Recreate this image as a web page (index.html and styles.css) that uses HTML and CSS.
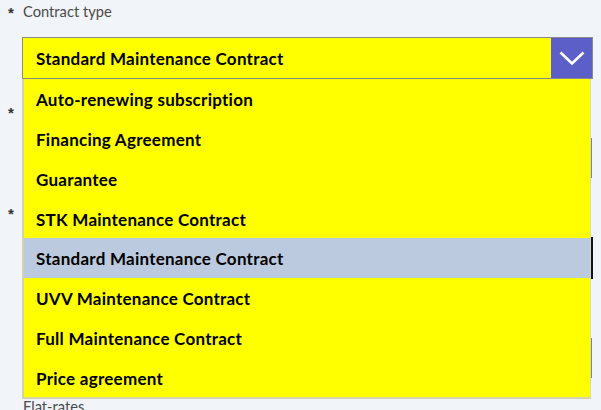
FILE: index.html
```html
<!DOCTYPE html>
<html lang="en">
<head>
<meta charset="utf-8">
<title>Contract type</title>
<link rel="stylesheet" href="styles.css">
</head>
<body>
<form class="form">
  <div class="field field-first">
    <div class="label"><span class="req">*</span><span class="label-text">Contract type</span></div>
    <div class="select">
      <span class="select-value">Standard Maintenance Contract</span>
      <span class="select-btn">
        <svg width="26" height="15" viewBox="0 0 26 15"><polyline points="1.5,1.5 13,12.5 24.5,1.5" fill="none" stroke="#ffffff" stroke-width="2.6"/></svg>
      </span>
    </div>
    <ul class="menu">
      <li class="opt">Auto-renewing subscription</li>
      <li class="opt">Financing Agreement</li>
      <li class="opt">Guarantee</li>
      <li class="opt">STK Maintenance Contract</li>
      <li class="opt opt-selected">Standard Maintenance Contract</li>
      <li class="opt">UVV Maintenance Contract</li>
      <li class="opt">Full Maintenance Contract</li>
      <li class="opt">Price agreement</li>
    </ul>
  </div>
  <div class="field field-2">
    <div class="label"><span class="req">*</span></div>
    <div class="input input-olive"></div>
  </div>
  <div class="field field-3">
    <div class="label"><span class="req">*</span></div>
    <div class="input input-dark"></div>
  </div>
  <div class="field field-4">
    <div class="label"></div>
    <div class="input input-olive"></div>
  </div>
  <div class="field field-5">
    <div class="label"><span class="req"></span><span class="label-text">Flat-rates</span></div>
  </div>
</form>
</body>
</html>
```

FILE: styles.css
```css
html, body {
  margin: 0;
  padding: 0;
  background: #f1f4f9;
  height: 410px;
  overflow: hidden;
}
body {
  font-family: "Lato", "Noto Sans", sans-serif;
}
.form {
  padding-left: 8px;
}
.field {
  position: relative;
}
.label {
  display: flex;
  align-items: center;
  height: 22px;
  font-size: 14.7px;
  color: #4a4a4a;
}
.req {
  width: 15px;
  font-size: 15px;
  color: #333;
  font-family: "Liberation Sans", sans-serif;
  font-weight: bold;
  line-height: 22px;
  padding-top: 4px;
  box-sizing: border-box;
}
.label-text {
  line-height: 22px;
}
.select {
  margin-top: 15px;
  margin-left: 14px;
  width: 571px;
  height: 42px;
  box-sizing: border-box;
  border: 1px solid #8a8a8a;
  background: #ffff00;
  display: flex;
  align-items: center;
}
.select-value {
  flex: 1;
  padding-left: 13px;
  font-size: 17px;
  letter-spacing: 0.25px;
  font-weight: bold;
  color: #000;
}
.select-btn {
  width: 41px;
  align-self: stretch;
  background: #5b5fc7;
  display: flex;
  align-items: center;
  justify-content: center;
}
.select-btn svg {
  display: block;
}
.menu {
  position: absolute;
  top: 79px;
  left: 14px;
  z-index: 5;
  margin: 0;
  padding: 0;
  list-style: none;
  width: 569px;
  box-sizing: border-box;
  background: #ffff00;
  border-left: 2px solid #d4d4a8;
  border-right: 1px solid #d8d8c0;
  border-bottom: 2px solid #d4d4b0;
}
.opt {
  height: 39.75px;
  display: flex;
  align-items: center;
  padding-left: 12px;
  padding-top: 2px;
  box-sizing: border-box;
  font-size: 17px;
  letter-spacing: 0.25px;
  font-weight: bold;
  color: #000;
}
.opt-selected {
  background: #bccadf;
}
.input {
  margin-left: 14px;
  box-sizing: border-box;
  background: #ffffff;
}
.field-2 { margin-top: 21px; }
.field-2 .input { margin-top: 16px; }
.field-3 { margin-top: 23px; }
.field-3 .input { margin-top: 14px; }
.field-4 { margin-top: 23px; }
.field-4 .input { margin-top: 14px; }
.field-5 { margin-top: 17px; }
.input-olive {
  width: 570px;
  height: 40px;
  border: 1px solid #8a8a5a;
}
.input-dark {
  width: 571px;
  height: 42px;
  border: 2px solid #111;
}
```
